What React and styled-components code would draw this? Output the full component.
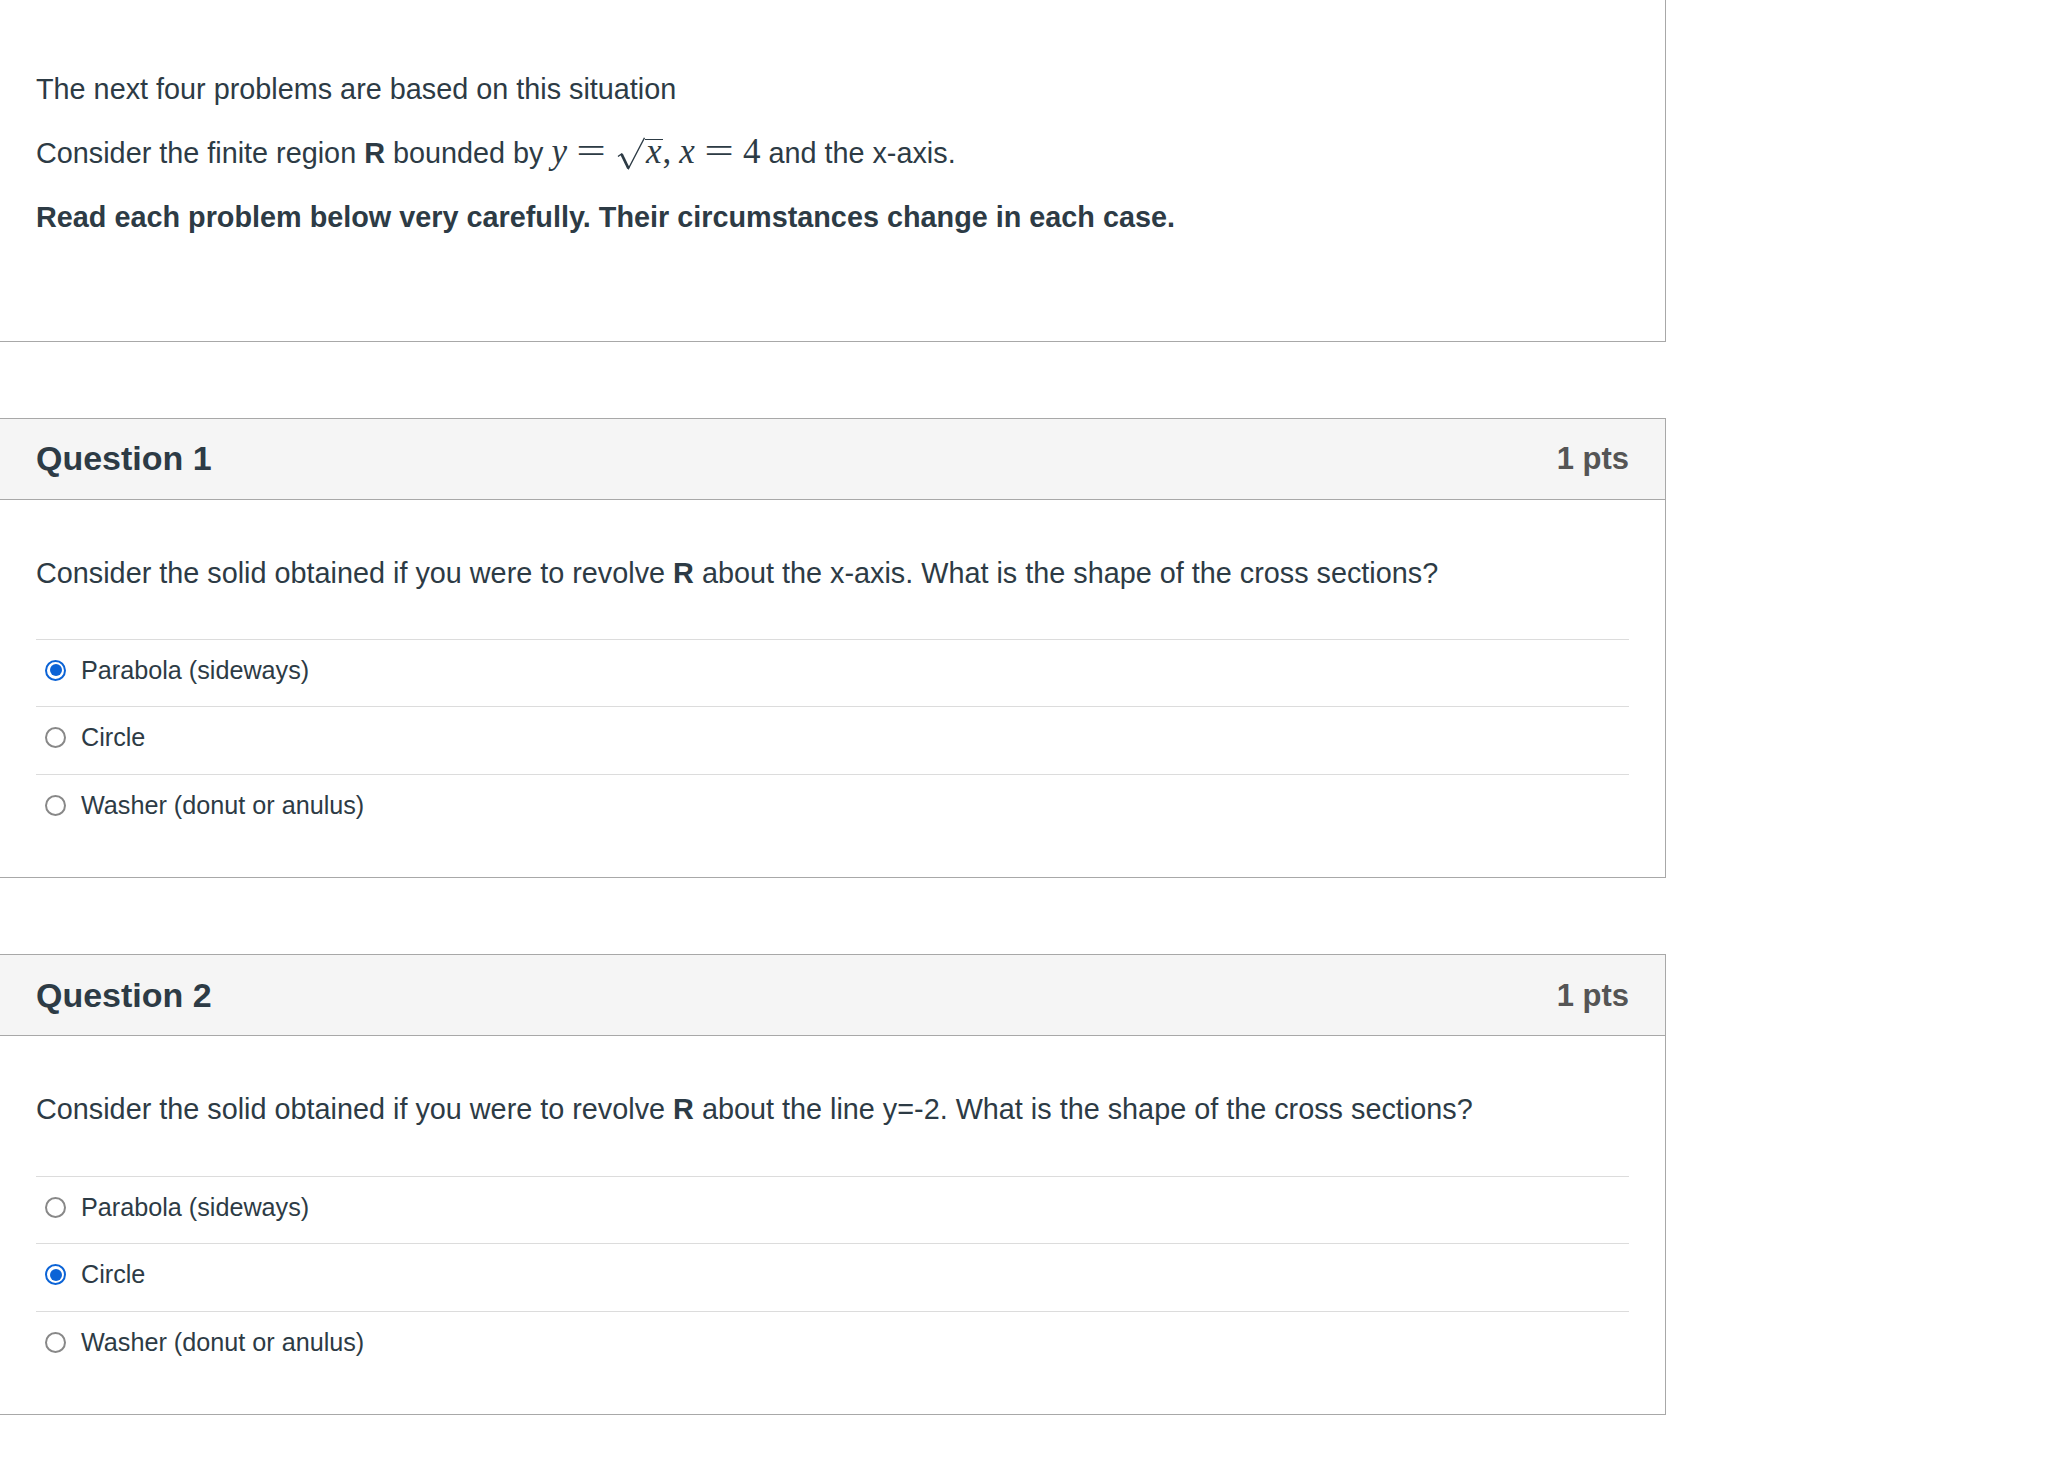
import React from 'react'
import styled, { createGlobalStyle } from 'styled-components'

const GlobalStyle = createGlobalStyle`
  html,
  body {
    margin: 0;
    padding: 0;
    background: #fff;
  }
  body {
    font-family: 'Liberation Sans', Helvetica, Arial, sans-serif;
    color: #2d3b45;
  }
`

const Page = styled.main`
  width: 1666px;
  display: flex;
  flex-direction: column;
  gap: 76px;
  padding-bottom: 46px;
`

const IntroPanel = styled.section`
  border-right: 1px solid #a8a8a8;
  border-bottom: 1px solid #a8a8a8;
  padding: 68px 36px 101px;
`

const Para = styled.p`
  margin: 0 0 21px;
  font-size: 28.8px;
  line-height: 43.2px;
  font-weight: ${props => (props.$strong ? 700 : 400)};
  &:last-child {
    margin-bottom: 0;
  }
`

/* inline math, roughly typeset like the rendered TeX */
const MathFormula = styled.span`
  font-family: 'Liberation Serif', 'Times New Roman', serif;
  font-size: 35px;
  line-height: 1;
  white-space: nowrap;
`

const Var = styled.span`
  font-style: italic;
`

const Rel = styled.span`
  display: inline-block;
  width: 32px;
  margin: 0 8px 0 8px;
  text-align: center;
  transform: scaleX(1.5);
`

const Punct = styled.span`
  margin-right: 8px;
`

const Sqrt = styled.span`
  margin-left: 2px;
  white-space: nowrap;
`

const RadicalSign = styled.svg`
  display: inline-block;
  width: 28px;
  height: 34px;
  vertical-align: -8px;
`

const Radicand = styled.span`
  display: inline-block;
  border-top: 1.5px solid #2d3b45;
  line-height: 24px;
  padding: 0 1px;
`

const QuestionCard = styled.section`
  border: 1px solid #a8a8a8;
  border-left: none;
`

const CardHeader = styled.header`
  display: flex;
  justify-content: space-between;
  align-items: center;
  box-sizing: border-box;
  height: 81px;
  padding: 0 36px;
  background: #f5f5f5;
  border-bottom: 1px solid #a8a8a8;
`

const Title = styled.h2`
  margin: 0;
  font-size: 34px;
  line-height: 43.2px;
  font-weight: 700;
  color: #2d3b45;
`

const Points = styled.span`
  font-size: 31px;
  line-height: 43.2px;
  font-weight: 700;
  color: #555;
`

const CardBody = styled.div`
  padding: 52px 36px 36px;
`

const QuestionText = styled.p`
  margin: 0 0 44px;
  font-size: 28.8px;
  line-height: 43.2px;
`

const AnswerRow = styled.label`
  display: flex;
  align-items: center;
  border-top: 1px solid #dcdcdc;
  padding: 12px 0 18.5px;
  font-size: 25.2px;
  line-height: 36px;
`

const Radio = styled.span`
  flex: none;
  position: relative;
  box-sizing: border-box;
  width: 21px;
  height: 21px;
  margin: 1px 15px 0 9px;
  border-radius: 50%;
  background: #fff;
  border: ${props => (props.$checked ? '2px solid #0b63d6' : '2px solid #888')};
  &::after {
    content: '';
    position: absolute;
    inset: 2.5px;
    border-radius: 50%;
    background: #0b63d6;
    display: ${props => (props.$checked ? 'block' : 'none')};
  }
`

const answers = ['Parabola (sideways)', 'Circle', 'Washer (donut or anulus)']

const questions = [
  { number: 1, about: 'the x-axis', selected: 0 },
  { number: 2, about: 'the line y=-2', selected: 1 },
]

const Radical = () => (
  <RadicalSign viewBox="0 0 28 34">
    <path d="M1 19.5 L4.5 17 L11.5 31.5 L27.5 0.75" fill="none" stroke="#2d3b45" strokeWidth="1.4" />
    <path d="M4.5 17 L11.5 31.5" fill="none" stroke="#2d3b45" strokeWidth="2.8" />
  </RadicalSign>
)

const RegionFormula = () => (
  <MathFormula>
    <Var>y</Var>
    <Rel>=</Rel>
    <Sqrt>
      <Radical />
      <Radicand>
        <Var>x</Var>
      </Radicand>
    </Sqrt>
    <Punct>,</Punct>
    <Var>x</Var>
    <Rel>=</Rel>
    4
  </MathFormula>
)

const Question = ({ number, about, selected }) => (
  <QuestionCard>
    <CardHeader>
      <Title>Question {number}</Title>
      <Points>1 pts</Points>
    </CardHeader>
    <CardBody>
      <QuestionText>
        Consider the solid obtained if you were to revolve <strong>R</strong> about {about}. What is
        the shape of the cross sections?
      </QuestionText>
      {answers.map((answer, i) => (
        <AnswerRow key={answer}>
          <Radio $checked={i === selected} />
          {answer}
        </AnswerRow>
      ))}
    </CardBody>
  </QuestionCard>
)

const App = () => (
  <>
    <GlobalStyle />
    <Page>
      <IntroPanel>
        <Para>The next four problems are based on this situation</Para>
        <Para>
          Consider the finite region <strong>R</strong> bounded by <RegionFormula /> and the x-axis.
        </Para>
        <Para $strong>Read each problem below very carefully. Their circumstances change in each case.</Para>
      </IntroPanel>
      {questions.map(q => (
        <Question key={q.number} {...q} />
      ))}
    </Page>
  </>
)

export default App
